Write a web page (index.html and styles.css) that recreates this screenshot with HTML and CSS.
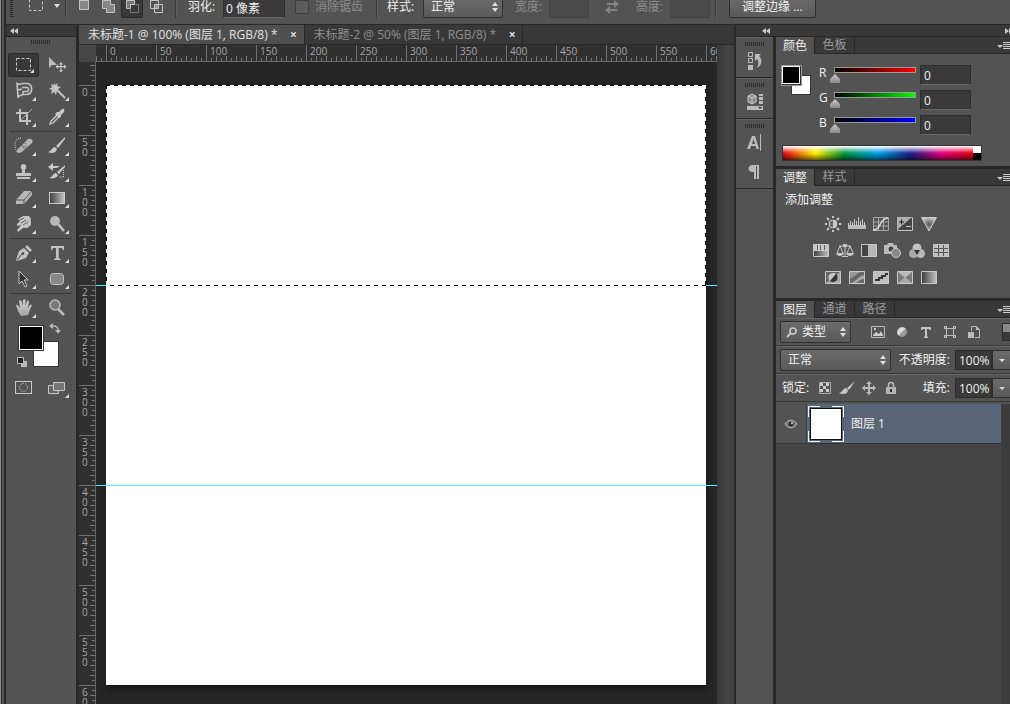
FILE: index.html
```
<!DOCTYPE html>
<html lang="zh-CN">
<head>
<meta charset="utf-8">
<title>未标题-1</title>
<link rel="stylesheet" href="styles.css">
</head>
<body>
<svg class="defs" aria-hidden="true">
  <defs>
    <linearGradient id="metal" x1="0" y1="0" x2="0" y2="1"><stop offset="0" stop-color="#d0d0d0"/><stop offset="1" stop-color="#a4a4a4"/></linearGradient>
    <linearGradient id="fade" x1="0" y1="0" x2="1" y2="0"><stop offset="0" stop-color="#3c3c3c"/><stop offset="1" stop-color="#c4c4c4"/></linearGradient>
    <radialGradient id="spot"><stop offset="0" stop-color="#555"/><stop offset="1" stop-color="#c4c4c4"/></radialGradient>
  </defs>
</svg>
<header class="options">
  <span class="vgrip"></span>
  <button class="preset" aria-label="矩形选框"><svg width="32" height="16" viewBox="0 0 32 16"><rect x="1.500" y="1.500" width="13" height="11" fill="none" stroke="#c8c8c8" stroke-dasharray="3 2"/><path d="M26 6h6l-3 4z" fill="#ddd"/></svg></button>
  <i class="rule"></i>
  <div class="modes">
    <button aria-label="新选区"><svg width="14" height="14"><rect x="2.500" y=".5" width="9" height="9" fill="#888" stroke="#c4c4c4"/></svg></button>
    <button aria-label="添加到选区"><svg width="14" height="14"><path d="M1.500.5h8v4h4v8h-8v-4h-4z" fill="#858585" stroke="#c4c4c4"/></svg></button>
    <button class="on" aria-label="从选区减去"><svg width="14" height="14"><path d="M1.500.5h8v4h-4v4h-4z" fill="#777" stroke="#c4c4c4"/><path d="M9.500 4.500h4v8h-8v-4" fill="none" stroke="#777"/></svg></button>
    <button aria-label="与选区交叉"><svg width="14" height="14"><path d="M1.500.5h8v8h-8z M5.500 4.500h8v8h-8z" fill="none" stroke="#c4c4c4"/><path d="M6 5h3v3H6z" fill="#999"/></svg></button>
  </div>
  <i class="rule"></i>
  <label class="feather" for="feather">羽化:</label><input class="field f62" id="feather" value="0 像素">
  <label class="dim anti"><input class="check" type="checkbox" disabled>消除锯齿</label>
  <i class="rule"></i>
  <label class="stylelabel" for="style">样式:</label><span class="select s80"><select id="style"><option>正常</option></select></span>
  <label class="dim wlabel" for="w">宽度:</label><input class="field f40 off" id="w" disabled>
  <button class="swap" disabled aria-label="交换宽高"><svg width="14" height="14"><path d="M2 3h7V0l5 4-5 4V5H2z M12 9H5V6l-5 4 5 4v-3h7z" fill="#858585"/></svg></button>
  <label class="dim hlabel" for="h">高度:</label><input class="field f40 off" id="h" disabled>
  <i class="rule"></i>
  <button class="push">调整边缘 ...</button>
</header>

<main class="work">
  <aside class="tools">
    <div class="collapse"><svg width="8" height="6"><path d="M4 0v6L0 3z M8 0v6L4 3z" fill="#ccc"/></svg></div>
    <div class="gripbox"><span class="hgrip"></span></div>
    <div class="toolgrid">
      <button class="tool on more" aria-label="矩形选框工具"><svg width="18" height="18"><rect x="1.500" y="2.500" width="14" height="12" fill="none" stroke="#d0d0d0" stroke-dasharray="3 2"/></svg></button>
      <button class="tool" aria-label="移动工具"><svg width="18" height="18"><path d="M1 1v11l3-3h5z" fill="#bbb"/><path d="M13 6l2 2.500h-1.500V10H16V8.500l2.500 2.200L16 13v-1.700h-2.500V14H15l-2 2.500L11 14h1.500v-2.700H10V13l-2.500-2.300L10 8.500V10h2.500V8.500H11z" fill="#ccc"/></svg></button>
      <button class="tool more" aria-label="磁性套索工具"><svg width="18" height="18"><path d="M7 5.500h5c2 0 2 4 0 4H8v3h4c6-1 6-9 1-11H7c-1 1-3 1-5 0l1 13 5-2M3 8l4-1M4 13l-1 3" fill="none" stroke="#c4c4c4" stroke-width="1.600"/></svg></button>
      <button class="tool more" aria-label="魔棒工具"><svg width="18" height="18"><path d="M6 0l1 3 3-2-1 3 4 1-3 2 2 3-3-1-1 4-2-3-3 2 1-4-3-1 3-2-1-3 3 1z" fill="#c2c2c2"/><path d="M9 8l8 8" stroke="#c2c2c2" stroke-width="2"/></svg></button>
      <button class="tool more" aria-label="裁剪工具"><svg width="18" height="18"><path d="M5 1v12h11M1 5h11v12" fill="none" stroke="#c2c2c2" stroke-width="2"/><path d="M6 12L17 1" stroke="#aaa"/></svg></button>
      <button class="tool more" aria-label="吸管工具"><svg width="18" height="18"><path d="M10 6L3 13l-1 3 3-1 7-7" fill="#666" stroke="#c8c8c8" stroke-width="1.300"/><path d="M9 4l2 0 3-3c2-1 3 1 2 3l-3 3v2l-2 1-4-4z" fill="#c8c8c8"/></svg></button>
      <hr>
      <button class="tool more" aria-label="修复画笔工具"><svg width="20" height="18"><path d="M7 1C3 1 1 4 1 8s1 6 2 7" fill="none" stroke="#ccc" stroke-dasharray="1 1"/><path d="M3 13L14 2c3-1 6 1 4 4L8 15c-3 2-6 1-5-2z" fill="#b4b4b4"/><path d="M8 9l5 2M11 6l2 5M8 8l3 5" stroke="#555" stroke-dasharray="1 1"/></svg></button>
      <button class="tool more" aria-label="画笔工具"><svg width="18" height="18"><path d="M17 0L8 9l2 2 7-9z M7 10c-3 0-3 4-7 5 4 2 8 1 9-3z" fill="#c8c8c8"/></svg></button>
      <button class="tool more" aria-label="仿制图章工具"><svg width="18" height="18"><path d="M8.500 1a3 3 0 0 1 1.500 5.500V10h6v3H1v-3h6V6.500A3 3 0 0 1 8.500 1zM2 14h13v2H2z" fill="#c2c2c2"/></svg></button>
      <button class="tool more" aria-label="历史记录画笔工具"><svg width="18" height="18"><path d="M17 2l-8 7 2 2 6-7z M8 10c-3 0-3 4-7 5 4 1 8 0 9-3z M0 4l5-4v3h7l-3 2H5v3z" fill="#c8c8c8"/><path d="M15.500 7v7h-5" fill="none" stroke="#ccc" stroke-dasharray="1 1"/></svg></button>
      <button class="tool more" aria-label="橡皮擦工具"><svg width="18" height="18"><path d="M9 2h8v4l-8 9H1v-4z" fill="#b8b8b8"/><path d="M1 11h8l8-9M9 11v4" fill="none" stroke="#555"/></svg></button>
      <button class="tool more" aria-label="渐变工具"><svg width="18" height="18"><rect x="1.500" y="3.500" width="15" height="11" fill="url(#fade)" stroke="#ccc"/></svg></button>
      <button class="tool more" aria-label="涂抹工具"><svg width="18" height="18"><path d="M3 4l5-3h6l2 3v6l-4 3H8l-5 4-1-2 4-5-4 1V9l3-3z" fill="#c2c2c2"/><path d="M6 8l5-3M8 10l5-3M5 5l4-2" stroke="#666"/></svg></button>
      <button class="tool more" aria-label="减淡工具"><svg width="18" height="18"><circle cx="7" cy="6" r="5" fill="#b8b8b8"/><path d="M10 9l6 7" stroke="#c2c2c2" stroke-width="2.500"/></svg></button>
      <hr>
      <button class="tool more" aria-label="钢笔工具"><svg width="18" height="18"><path d="M12 1l5 5-2 2-5-5z M9 4l5 5-3 5-9 3-1-1 3-9z" fill="#c2c2c2"/><path d="M2 16l5-6" stroke="#444"/><circle cx="8" cy="9.500" r="1.300" fill="#444"/></svg></button>
      <button class="tool more" aria-label="文字工具"><svg width="18" height="18"><path d="M3 2h13v4h-1l-1-2h-3.300v10l2 1v1H6v-1l2-1V4H5L4 6H3z" fill="#c2c2c2"/></svg></button>
      <button class="tool more" aria-label="选择工具"><svg width="18" height="18"><path d="M4 1v13l3-3 3 6 2-1-3-6h4z" fill="#333" stroke="#c4c4c4"/></svg></button>
      <button class="tool more" aria-label="圆角矩形工具"><svg width="18" height="18"><rect x="2.500" y="3.500" width="13" height="11" rx="3" fill="#888" stroke="#c4c4c4"/></svg></button>
      <hr>
      <button class="tool more" aria-label="抓手工具"><svg width="18" height="18"><path d="M1 6c1-1 2 0 4 3L4 2c1-1 2-1 2.500 0l1 5L8 1c1-1 2-1 2.500 0V7L12 2c1-1 2 0 2 1l-1 6 2-3c1-1 3 0 1 2l-3 8-7 1-3-5z" fill="url(#metal)"/></svg></button>
      <button class="tool" aria-label="缩放工具"><svg width="18" height="18"><circle cx="7" cy="6" r="5" fill="#777" stroke="#bbb" stroke-width="1.500"/><path d="M10 10l6 6" stroke="#bbb" stroke-width="2.500"/></svg></button>
    </div>
    <svg class="colors" width="66" height="54" role="img" aria-label="前景色与背景色">
      <rect x="26.500" y="20.500" width="25" height="25" fill="#fff" stroke="#333"/>
      <rect x="11.500" y="4.500" width="25" height="25" fill="#000" stroke="#333"/><rect x="12.500" y="5.500" width="23" height="23" fill="#000" stroke="#fff"/>
      <path d="M46 2v6l-4-3z M48 9h6l-3 4z" fill="#bbb"/><path d="M46 5c4 0 5 1 5 5" fill="none" stroke="#bbb" stroke-width="1.500"/>
      <path d="M14 40h6v6h-6z" fill="#bbb"/><path d="M10.500 36.500h6v6h-6z" fill="#222" stroke="#bbb"/>
    </svg>
    <div class="toolgrid">
      <button class="tool" aria-label="快速蒙版"><svg width="18" height="16"><rect x=".5" y="1.500" width="16" height="12" fill="none" stroke="#c8c8c8"/><circle cx="8.500" cy="7.500" r="4" fill="none" stroke="#ddd" stroke-dasharray="1 1.500"/></svg></button>
      <button class="tool more" aria-label="屏幕模式"><svg width="18" height="16"><path d="M.5 5.500h10v8H.5z" fill="#666" stroke="#c8c8c8"/><path d="M5.500 2.500h11v8h-11z" fill="#777" stroke="#c8c8c8"/></svg></button>
    </div>
  </aside>

  <section class="doc">
    <nav class="doctabs">
      <div class="doctab active"><span>未标题-1 @ 100% (图层 1, RGB/8) *</span><button aria-label="关闭">×</button></div>
      <div class="doctab"><span>未标题-2 @ 50% (图层 1, RGB/8) *</span><button aria-label="关闭">×</button></div>
    </nav>
    <div class="docbody">
      <div class="sheet">
        <div class="corner"></div>
        <div class="hruler"><span>0</span><span>50</span><span>100</span><span>150</span><span>200</span><span>250</span><span>300</span><span>350</span><span>400</span><span>450</span><span>500</span><span>550</span><span>600</span></div>
        <div class="vruler"><span>0</span><span>50</span><span>100</span><span>150</span><span>200</span><span>250</span><span>300</span><span>350</span><span>400</span><span>450</span><span>500</span><span>550</span><span>600</span></div>
        <div class="viewport">
          <div class="canvas"></div>
          <div class="guide g200"></div>
          <div class="guide g400"></div>
          <div class="ants"></div>
        </div>
      </div>
      <div class="vscroll"></div>
    </div>
  </section>

  <aside class="right">
    <div class="collapse wide"><svg width="8" height="6"><path d="M4 0v6L0 3z M8 0v6L4 3z" fill="#ccc"/></svg><svg width="8" height="6"><path d="M0 0v6l4-3z M4 0v6l4-3z" fill="#ccc"/></svg></div>
    <div class="docks">
      <div class="strip">
        <div class="group"><span class="hgrip"></span>
          <button aria-label="历史记录"><svg width="16" height="18"><path d="M1.500.5h4v4h-4z M1.500 6.500h4v4h-4z" fill="none" stroke="#bbb"/><path d="M1 13h5v5H1z" fill="#bbb"/><path d="M8 2h6l-2 2c4 4 3 9-2 12 2-4 2-7 0-9L8 9z" fill="#bbb"/></svg></button></div>
        <div class="group"><span class="hgrip"></span>
          <button aria-label="属性"><svg width="16" height="18"><path d="M5 1l4 2v6l-4 2-4-2V3z" fill="#888" stroke="#ccc"/><path d="M1 3l4 2 4-2M5 5v6" fill="none" stroke="#ccc"/><path d="M12 1h4v2h-4z M12 4h4v3h-4z M12 8h4v3h-4z M0 13h16v4H0z" fill="#bbb"/><path d="M11 14h4l-2 2z" fill="#333"/></svg></button></div>
        <div class="group"><span class="hgrip"></span>
          <button aria-label="字符"><svg width="16" height="18"><path d="M0 15L5 2h3l4 13H9.500l-1-3H4l-1 3z M5 10h3L6.500 5z" fill="#bbb" fill-rule="evenodd"/><path d="M13.500 0v17" stroke="#bbb"/></svg></button>
          <button aria-label="段落"><svg width="16" height="18"><path d="M12 2H6C0 2 0 9 6 9v0h1v7h2V3h1v13h2z" fill="#bbb"/></svg></button></div>
      </div>
      <div class="panels">
        <section class="panel">
          <div class="tabs"><button class="active">颜色</button><button>色板</button><i class="menu"></i></div>
          <div class="color">
            <svg class="chips" width="32" height="34" role="img" aria-label="颜色"><rect x="10.500" y="10.500" width="19" height="19" fill="#fff" stroke="#333"/><rect x=".5" y=".5" width="20" height="20" fill="#333" stroke="#999"/><rect x="1.500" y="1.500" width="17" height="17" fill="#000" stroke="#fff"/></svg>
            <div class="channels">
              <label for="r">R</label><input id="r" class="slide red" type="range" min="0" max="255" value="0"><input class="num" value="0" aria-label="R">
              <label for="g">G</label><input id="g" class="slide green" type="range" min="0" max="255" value="0"><input class="num" value="0" aria-label="G">
              <label for="b">B</label><input id="b" class="slide blue" type="range" min="0" max="255" value="0"><input class="num" value="0" aria-label="B">
            </div>
          </div>
          <div class="spectrum"><i class="hues"></i><i class="bw"></i></div>
        </section>
        <section class="panel">
          <div class="tabs"><button class="active">调整</button><button>样式</button><i class="menu"></i></div>
          <p class="addadj">添加调整</p>
          <div class="adj">
            <button aria-label="亮度/对比度"><svg width="18" height="16"><circle cx="9" cy="8" r="4" fill="#666" stroke="#c8c8c8"/><path d="M9 4a4 4 0 0 1 0 8z" fill="#c8c8c8"/><path d="M9 0v2M9 14v2M1 8h2M15 8h2M3 2l2 2M15 2l-2 2M3 14l2-2M15 14l-2-2" stroke="#c8c8c8" stroke-width="2"/></svg></button>
            <button aria-label="色阶"><svg width="18" height="16"><path d="M0 9h18v4H0z" fill="#bbb"/><path d="M.5 7v3M2.500 5v5M4.500 6v4M6.500 3v7M8.500 5v5M10.500 1v9M12.500 5v5M14.500 3v7M16.500 6v4" stroke="#c8c8c8"/></svg></button>
            <button aria-label="曲线"><svg width="18" height="16"><path d="M1.500 1.500h15v13h-15z M1.500 6h15M1.500 10h15M6.500 1.500v13M11.500 1.500v13" fill="none" stroke="#a8a8a8"/><path d="M1 14c9 0 5-11 15-12" fill="none" stroke="#e0e0e0" stroke-width="1.500"/></svg></button>
            <button aria-label="曝光度"><svg width="18" height="16"><path d="M1.500 1.500h15v13h-15z" fill="#444" stroke="#c8c8c8"/><path d="M1 1h15L1 14z" fill="#b0b0b0"/><path d="M3 6h5M5.500 3.500v5" stroke="#222"/><path d="M10 10.500h5" stroke="#ccc"/></svg></button>
            <button aria-label="自然饱和度"><svg width="18" height="16"><path d="M1.500 1.500h15L9 15z" fill="url(#spot)" stroke="#c8c8c8"/></svg></button>
          </div>
          <div class="adj">
            <button aria-label="色相/饱和度"><svg width="18" height="16"><path d="M1.500 1.500h15v12h-15z" fill="url(#fade)" stroke="#c8c8c8"/><path d="M2 2h14v6H2z" fill="#c8c8c8"/><path d="M5.500 2v5M8.500 2v5M12.500 2v5" stroke="#666"/></svg></button>
            <button aria-label="色彩平衡"><svg width="18" height="16"><path d="M9 1v12M3 3h12M4 3L1 10M4 3l3 7M14 3l-3 7M14 3l3 7M6 13.500h6" fill="none" stroke="#c8c8c8"/><path d="M0 10h8c-1 4-7 4-8 0zM10 10h8c-1 4-7 4-8 0zM7 1h4v3H7z" fill="#c8c8c8"/></svg></button>
            <button aria-label="黑白"><svg width="18" height="16"><path d="M1.500 1.500h15v12h-15z" fill="#444" stroke="#c8c8c8"/><path d="M8 2h8v11H8z" fill="#b8b8b8"/></svg></button>
            <button aria-label="照片滤镜"><svg width="18" height="16"><path d="M0 2h3l1-2h5l1 2h3v9H0z" fill="#bbb"/><circle cx="7" cy="6" r="2.500" fill="#444"/><circle cx="12" cy="10" r="4.500" fill="#888" stroke="#c8c8c8"/></svg></button>
            <button aria-label="通道混合器"><svg width="18" height="16"><circle cx="9" cy="5" r="4.500" fill="#c4c4c4"/><circle cx="5.500" cy="10.500" r="4.500" fill="#aaa"/><circle cx="12.500" cy="10.500" r="4.500" fill="#b8b8b8"/><path d="M6 7h6l-3 5z" fill="#333"/></svg></button>
            <button aria-label="颜色查找"><svg width="18" height="16"><path d="M1 1h16v13H1z" fill="#c0c0c0"/><path d="M2 5.500h14M2 9.500h14M6.500 2v11M11.500 2v11" stroke="#555"/></svg></button>
          </div>
          <div class="adj">
            <button aria-label="反相"><svg width="18" height="16"><path d="M1.500 1.500h15v12h-15z" fill="#666" stroke="#c8c8c8"/><path d="M16 2v11H2z" fill="#aaa"/><path d="M6 11A4 4 0 0 1 12 4z" fill="#c8c8c8"/><path d="M6 11A4 4 0 0 0 12 4z" fill="#333"/></svg></button>
            <button aria-label="色调分离"><svg width="18" height="16"><path d="M1.500 1.500h15v12h-15z" fill="#666" stroke="#c8c8c8"/><path d="M2 8c5 0 6-5 11-6H2z" fill="#999"/><path d="M3 13c5-1 6-6 13-8v4c-4 0-6 3-8 4z" fill="#aaa"/></svg></button>
            <button aria-label="阈值"><svg width="18" height="16"><path d="M1.500 1.500h15v12h-15z" fill="#c0c0c0" stroke="#c8c8c8"/><path d="M3 11v-2h3V7h3V5h4V3h3v2h-2v2h-3v2H8v2z" fill="#333"/></svg></button>
            <button aria-label="可选颜色"><svg width="18" height="16"><path d="M1.500 1.500h15v12h-15z" fill="#777" stroke="#c8c8c8"/><path d="M2 2h14L9 8z" fill="#b8b8b8"/><path d="M2 13h14L9 7z" fill="#aaa"/></svg></button>
            <button aria-label="渐变映射"><svg width="18" height="16"><path d="M1.500 1.500h15v12h-15z" fill="url(#fade)" stroke="#c8c8c8"/></svg></button>
          </div>
        </section>
        <section class="panel layers">
          <div class="tabs"><button class="active">图层</button><button>通道</button><button>路径</button><i class="menu"></i></div>
          <div class="lrow filter">
            <span class="select kind"><svg width="12" height="12"><circle cx="7" cy="5" r="3" fill="none" stroke="#ccc" stroke-width="1.500"/><path d="M5 7l-4 4" stroke="#ccc" stroke-width="2"/></svg><select aria-label="类型"><option>类型</option></select></span>
            <div class="kinds">
              <button aria-label="像素图层"><svg width="14" height="14"><path d="M.5 1.500h13v11H.5z" fill="#555" stroke="#bbb"/><path d="M2 10l3-3 3 2 2-3 2 4v1H2z M3 3h2v2H3z" fill="#ccc"/></svg></button>
              <button aria-label="调整图层"><svg width="14" height="14"><circle cx="7" cy="7" r="5" fill="#999"/><path d="M3.500 10.500l7-7A5 5 0 0 0 3.500 10.500z" fill="#ddd"/></svg></button>
              <button aria-label="文字图层"><svg width="14" height="14"><path d="M2 2h10v3h-1l-1-1H8v7l1 1v1H5v-1l1-1V4H4L3 5H2z" fill="#c4c4c4"/></svg></button>
              <button aria-label="形状图层"><svg width="14" height="14"><path d="M3.500 3.500h7v7h-7z" fill="none" stroke="#bbb"/><path d="M1.500 1.500h2v2h-2z M10.500 1.500h2v2h-2z M1.500 10.500h2v2h-2z M10.500 10.500h2v2h-2z" fill="#555" stroke="#c8c8c8"/></svg></button>
              <button aria-label="智能对象"><svg width="14" height="14"><path d="M4.500 6V1.500h5l3 3v8H8" fill="none" stroke="#bbb"/><path d="M9 1v4h4z M1 7h6v6H1z" fill="#bbb"/></svg></button>
            </div>
            <button class="switch" aria-label="过滤开关"></button>
          </div>
          <div class="lrow">
            <span class="select blend"><select aria-label="混合模式"><option>正常</option></select></span>
            <label class="oplabel" for="op">不透明度:</label><input class="pct" id="op" value="100%"><button class="drop" aria-label="不透明度选项"></button>
          </div>
          <div class="lrow">
            <span class="lock">锁定:</span>
            <div class="locks">
              <button aria-label="锁定透明像素"><svg width="14" height="14"><path d="M1.500 1.500h11v11h-11z" fill="#555" stroke="#aaa"/><path d="M2 2h3v3H2z M8 2h3v3H8z M5 5h3v3H5z M2 8h3v3H2z M8 8h3v3H8z" fill="#ccc"/></svg></button>
              <button aria-label="锁定图像像素"><svg width="16" height="14"><path d="M16 0L8 7l2 2z M7 7c-3 0-3 4-7 5 4 2 9 1 9-3z" fill="#c8c8c8"/></svg></button>
              <button aria-label="锁定位置"><svg width="14" height="14"><path d="M7 0l3 3H8v3h3V4l3 3-3 3V8H8v3h2l-3 3-3-3h2V8H3v2L0 7l3-3v2h3V3H4z" fill="#bbb"/></svg></button>
              <button aria-label="锁定全部"><svg width="14" height="14"><path d="M4.500 6V4a2.500 2.500 0 0 1 5 0v2" fill="none" stroke="#bbb" stroke-width="1.500"/><path d="M2 6h10v7H2z" fill="#b4b4b4"/><path d="M7 8v3" stroke="#333" stroke-width="2"/></svg></button>
            </div>
            <label class="oplabel fill" for="fill">填充:</label><input class="pct" id="fill" value="100%"><button class="drop" aria-label="填充选项"></button>
          </div>
          <div class="layerlist">
            <div class="layer">
              <button class="eye" aria-label="指示图层可见性"><svg width="14" height="12"><path d="M1 6c3-5 9-5 12 0-3 5-9 5-12 0z" fill="#777" stroke="#b8b8b8"/><circle cx="7" cy="6" r="2.500" fill="#333"/><circle cx="8" cy="5" r="1" fill="#ddd"/></svg></button>
              <div class="layerbody"><svg width="36" height="36"><path d="M.5 11V.5H12M24 .5h11.500V11M35.500 25v10.500H24M12 35.500H.5V25" fill="none" stroke="#fff"/><rect x="2.500" y="2.500" width="31" height="31" fill="#fff" stroke="#111"/></svg><span>图层 1</span></div>
            </div>
          </div>
        </section>
      </div>
    </div>
  </aside>
</main>
</body>
</html>
```
FILE: styles.css
```
* { box-sizing: border-box; }
body {
  margin: 0;
  height: 100vh;
  overflow: hidden;
  display: flex;
  flex-direction: column;
  padding-left: 6px;
  background: linear-gradient(90deg, #8b9193 0 1px, #2b2d2e 1px 2px, #535353 2px 4px, #282828 4px 6px, #282828 6px);
  color: #f0f0f0;
  font: 12px/16px "Open Sans", "Noto Sans CJK SC", sans-serif;
}
.defs { position: absolute; width: 0; height: 0; }
button, input, select { font: inherit; color: inherit; margin: 0; padding: 0; border: 0; background: none; border-radius: 0; outline: 0; }
button { display: flex; align-items: center; justify-content: center; }
svg { display: block; flex: none; overflow: visible; }
i { display: block; }

/* options bar */
.options {
  flex: none;
  height: 24px;
  display: flex;
  align-items: flex-end;
  padding: 0 0 6px 4px;
  background: #535353;
  white-space: nowrap;
}
.options > * { flex: none; }
.options label { height: 22px; line-height: 22px; }
.options .dim { color: #8c8c8c; }
.vgrip { width: 3px; height: 22px; background: repeating-linear-gradient(#2c2c2c 0 1px, #535353 1px 2px); }
.preset { width: 32px; height: 24px; margin-left: 15px; }
.rule { width: 2px; height: 22px; background: #3a3a3a; border-right: 1px solid #5f5f5f; margin: 0 5px; }
.modes { display: flex; gap: 2px; margin: 0 3px 0 1px; }
.modes button { width: 22px; height: 22px; }
.modes .on { background: #393939; border: 1px solid #2b2b2b; border-radius: 2px; }
.feather { width: 35px; margin-left: 6px; }
.field { height: 20px; padding: 0 2px; background: #3a3a3a; border: 1px solid #2f2f2f; border-bottom-color: #666; }
.off { background: #4a4a4a; border-color: #434343; }
.f62 { width: 62px; }
.f40 { width: 40px; }
.anti { display: flex; align-items: center; gap: 6px; margin: 0 8px 0 10px; }
.check { appearance: none; width: 14px; height: 14px; border: 1px solid #3c3c3c; border-radius: 2px; background: #5c5c5c; }
.stylelabel { width: 36px; margin-left: 4px; }
.select { position: relative; display: flex; align-items: center; height: 22px; border: 1px solid #303030; border-radius: 2px; background: linear-gradient(#6b6b6b, #5a5a5a); }
.select::after {
  content: ""; position: absolute; right: 4px; top: 5px; width: 6px; height: 10px; background: #ddd;
  clip-path: polygon(50% 0, 100% 40%, 0 40%, 0 60%, 100% 60%, 50% 100%, 0 60%, 0 40%);
}
.select select { appearance: none; flex: 1; min-width: 0; padding-left: 7px; }
.s80 { width: 80px; }
.wlabel { width: 34px; margin-left: 12px; }
.swap { width: 14px; height: 22px; margin: 0 17px 0 16px; }
.hlabel { width: 34px; }
.push { height: 22px; padding: 0 12px; margin-left: 7px; border: 1px solid #303030; border-radius: 2px; background: linear-gradient(#6b6b6b, #5a5a5a); }

.work { flex: 1; min-height: 0; display: flex; padding-top: 1px; background: #282828; }
.collapse { height: 12px; flex: none; display: flex; align-items: center; padding-left: 4px; background: #393939; border-bottom: 1px solid #282828; }
.hgrip { display: block; width: 20px; height: 4px; background: repeating-linear-gradient(90deg, #2e2e2e 0 1px, #535353 1px 2px); }

/* tools */
.tools { flex: none; width: 70px; background: #535353; }
.gripbox { display: flex; justify-content: center; padding-top: 3px; height: 15px; }
.toolgrid { display: grid; grid-template-columns: 33px 33px; padding-left: 1px; }
.toolgrid hr { grid-column: 1 / 3; margin: 1px 3px; height: 1px; border: 0; width: 62px; background: #3a3a3a; }
.tool { position: relative; height: 26px; }
.tool.more::after { content: ""; position: absolute; right: 4px; bottom: 3px; border: 2px solid; border-color: transparent #ddd #ddd transparent; }
.tool.on { margin: 1px; height: 24px; background: #383838; border: 1px solid #2c2c2c; border-radius: 2px; }
.colors { margin-left: 1px; }

/* document window */
.doc { flex: 1; min-width: 0; margin: 0 2px 0 3px; display: flex; flex-direction: column; }
.doctabs { flex: none; height: 19px; display: flex; background: #383838; }
.doctab { display: flex; align-items: center; gap: 11px; padding: 0 5px 0 9px; color: #8f8f8f; border-right: 1px solid #282828; white-space: nowrap; line-height: 18px; }
.doctab.active { background: #4f4f4f; color: #e2e2e2; }
.doctab button { width: 10px; height: 14px; color: #ddd; font-weight: bold; }
.docbody { flex: 1; min-height: 0; display: flex; border-top: 1px solid #282828; }
.sheet { flex: 1; min-width: 0; display: grid; grid-template: 17px minmax(0, 1fr) / 17px minmax(0, 1fr); background: #262626; }
.corner { background: #474747; }
.hruler, .vruler { display: flex; overflow: hidden; color: #a8a8a8; font-size: 10px; line-height: 10px; }
.hruler {
  padding-left: 10px;
  border-bottom: 1px solid #666;
  background: repeating-linear-gradient(90deg, #777 0 1px, transparent 1px 10px) 0 100% / 100% 5px no-repeat,
    repeating-linear-gradient(90deg, transparent 0 5px, #777 5px 6px, transparent 6px 10px) 0 100% / 100% 3px no-repeat, #303030;
}
.hruler span { flex: none; width: 50px; padding: 1px 3px; border-left: 1px solid #707070; }
.vruler {
  flex-direction: column;
  padding-top: 23px;
  border-right: 1px solid #666;
  background: repeating-linear-gradient(transparent 0 3px, #777 3px 4px, transparent 4px 10px) 100% 0 / 5px 100% no-repeat,
    repeating-linear-gradient(transparent 0 8px, #777 8px 9px, transparent 9px 10px) 100% 0 / 3px 100% no-repeat, #303030;
}
.vruler span { flex: none; height: 50px; padding: 1px 8px 0 3px; border-top: 1px solid #707070; word-break: break-all; }
.viewport { position: relative; overflow: hidden; padding: 23px 10px; }
.canvas { width: 600px; height: 600px; background: #fff; box-shadow: 1px 3px 5px #141414; }
.guide { position: absolute; left: 0; right: 0; height: 1px; background: #4af6ff; }
.g200 { top: 223px; }
.g400 { top: 423px; }
.ants {
  position: absolute; left: 10px; top: 23px; width: 600px; height: 201px;
  background:
    repeating-linear-gradient(90deg, #000 0 4px, #fff 4px 8px) 0 0 / 100% 1px no-repeat,
    repeating-linear-gradient(90deg, #fff 0 4px, #000 4px 8px) 0 100% / 100% 1px no-repeat,
    repeating-linear-gradient(#000 0 4px, #fff 4px 8px) 0 0 / 1px 100% no-repeat,
    repeating-linear-gradient(#fff 0 4px, #000 4px 8px) 100% 0 / 1px 100% no-repeat;
}
.vscroll { flex: none; width: 17px; background: linear-gradient(90deg, #383838, #444 60%, #404040); }

/* right docks */
.right { flex: none; width: 274px; display: flex; flex-direction: column; }
.wide { justify-content: space-between; padding: 0 0 0 26px; overflow: hidden; }
.wide svg:last-child { margin-right: -3px; }
.docks { flex: 1; min-height: 0; display: flex; gap: 3px; }
.strip { width: 37px; flex: none; background: #535353; }
.group { display: flex; flex-direction: column; align-items: center; padding: 4px 0 2px; border-top: 1px solid #636363; border-bottom: 1px solid #282828; }
.group button { width: 28px; height: 29px; }
.panels { flex: 1; min-width: 0; display: flex; flex-direction: column; gap: 3px; }
.panel { background: #535353; overflow: hidden; }
.tabs { display: flex; height: 17px; background: #393939; }
.tabs button { width: 40px; color: #999; border: solid #282828; border-width: 0 1px 1px 0; line-height: 16px; }
.tabs .active { width: 39px; background: #535353; color: #eee; border-bottom: 0; }
.menu {
  flex: 1;
  position: relative;
  border-bottom: 1px solid #282828;
  background: repeating-linear-gradient(#ccc 0 1px, transparent 1px 2px) no-repeat right 0 top 5px / 7px 8px;
}
.menu::after { content: ""; position: absolute; right: 7px; top: 8px; border: 3px solid transparent; border-top-color: #ccc; border-bottom: 0; }
.color { display: flex; padding: 11px 0 0 5px; }
.channels { display: grid; grid-template-columns: 11px 82px 51px; column-gap: 4px; padding-left: 6px; }
.channels label { line-height: 16px; height: 25px; }
.slide { appearance: none; height: 18px; width: 82px; margin-top: 1px; }
.slide::-webkit-slider-runnable-track { height: 6px; border: 1px solid #999; margin-bottom: 10px; }
.slide::-webkit-slider-thumb {
  appearance: none; width: 10px; height: 9px; margin-top: 6px; margin-left: -5px; background: linear-gradient(#ccc, #888);
  clip-path: polygon(50% 0, 100% 55%, 100% 100%, 0 100%, 0 55%);
}
.red::-webkit-slider-runnable-track { background: linear-gradient(90deg, #000, #f00); }
.green::-webkit-slider-runnable-track { background: linear-gradient(90deg, #000, #0f0); }
.blue::-webkit-slider-runnable-track { background: linear-gradient(90deg, #000, #00f); }
.num { width: 51px; height: 20px; padding: 0 3px; background: #3a3a3a; border: 1px solid #2d2d2d; border-bottom-color: #666; }
.spectrum { display: flex; width: 200px; height: 16px; margin: 5px 0 5px 6px; border: 1px solid #333; }
.hues { flex: 1; background: linear-gradient(#fff, transparent 50%, transparent 55%, #0009), linear-gradient(90deg, #e60012, #fff100 17%, #00993e 32%, #00a0e9 50%, #1d2088 67%, #e4007f 83%, #e60012); }
.bw { width: 8px; background: linear-gradient(#fff 50%, #000 50%); }
.addadj { margin: 0; padding: 6px 9px 0; height: 24px; }
.adj { display: flex; justify-content: center; gap: 6px; height: 27px; width: 210px; }
.adj:last-child { height: 34px; padding-bottom: 7px; }
.adj button { width: 18px; height: 27px; }
.layers { flex: 1; display: flex; flex-direction: column; }
.lrow { flex: none; height: 28px; display: flex; align-items: center; padding-left: 4px; border-top: 1px solid #666; border-bottom: 1px solid #3a3a3a; white-space: nowrap; }
.lrow > * { flex: none; }
.kind { width: 71px; padding-left: 5px; }
.kind select { padding-left: 4px; }
.kinds { display: flex; gap: 10px; padding-left: 20px; }
.switch { width: 10px; height: 18px; margin-left: 21px; border: 1px solid #2c2c2c; background: linear-gradient(#888 50%, #3a3a3a 50%); }
.blend { width: 111px; }
.oplabel { width: 64px; text-align: right; padding-right: 5px; }
.pct { width: 37px; height: 20px; padding-left: 3px; background: #3a3a3a; border: 1px solid #2d2d2d; }
.drop { width: 20px; height: 20px; background: linear-gradient(#6b6b6b, #5a5a5a); border: 1px solid #2d2d2d; }
.drop::after { content: ""; border: 3px solid transparent; border-top-color: #ddd; border-bottom: 0; }
.lock { width: 38px; padding-left: 2px; }
.locks { display: flex; gap: 8px; width: 73px; }
.locks button { width: 14px; }
.layerlist { flex: 1; margin-top: 2px; background: #454545; border-right: 9px solid #3c3c3c; }
.layer { display: flex; height: 40px; border-bottom: 1px solid #333; }
.eye { width: 31px; background: #535353; border-right: 1px solid #3c3c3c; }
.layerbody { flex: 1; display: flex; align-items: center; gap: 7px; padding-left: 1px; background: #586678; }
```
